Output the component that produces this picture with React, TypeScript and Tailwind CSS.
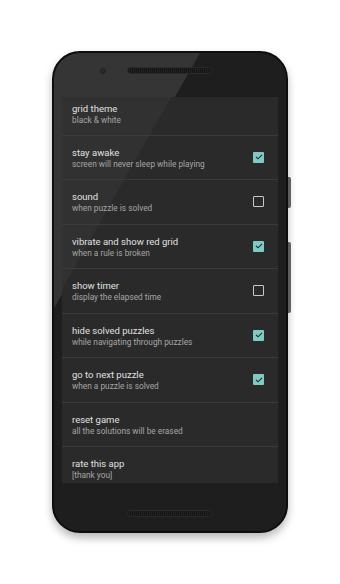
import React from "react";

type Pref = { title: string; summary: string; check?: boolean };

const prefs: Pref[] = [
  { title: "grid theme", summary: "black & white" },
  { title: "stay awake", summary: "screen will never sleep while playing", check: true },
  { title: "sound", summary: "when puzzle is solved", check: false },
  { title: "vibrate and show red grid", summary: "when a rule is broken", check: true },
  { title: "show timer", summary: "display the elapsed time", check: false },
  { title: "hide solved puzzles", summary: "while navigating through puzzles", check: true },
  { title: "go to next puzzle", summary: "when a puzzle is solved", check: true },
  { title: "reset game", summary: "all the solutions will be erased" },
  { title: "rate this app", summary: "[thank you]" },
];

function CheckBox({ on }: { on: boolean }) {
  if (!on) {
    return <div className="w-[11px] h-[11px] rounded-[1px] border-[1.5px] border-[#c9c9c9]" />;
  }
  return (
    <div className="w-[11px] h-[11px] rounded-[1px] bg-[#7fcbc3] flex items-center justify-center">
      <svg width="8" height="8" viewBox="0 0 24 24" fill="none">
        <path d="M4 12.5l5 5L20 6.5" stroke="#1f2a29" strokeWidth="3.2" strokeLinecap="square" />
      </svg>
    </div>
  );
}

function Row({ pref, index }: { pref: Pref; index: number }) {
  const first = index === 0;
  const last = index === prefs.length - 1;
  return (
    <div
      className={`flex items-center shrink-0 pl-[10px] pr-[14px] ${
        first ? "h-[38.5px]" : last ? "flex-1" : "h-[44.5px]"
      } ${last ? "" : "border-b border-[#3b3b3b]"}`}
    >
      <div className={`flex-1 min-w-0 ${first ? "mt-[-3px]" : last ? "self-start pt-[11px]" : "pt-[2px]"}`}>
        <div className="text-[9.5px] leading-[12px] text-[#e0e0e0]">{pref.title}</div>
        <div className="text-[8.3px] leading-[11px] text-[#a6a6a6]">{pref.summary}</div>
      </div>
      {pref.check !== undefined && <CheckBox on={pref.check} />}
    </div>
  );
}

export default function App() {
  return (
    <div
      className="w-[340px] h-[584px] bg-white pt-[51px] overflow-hidden"
      style={{ fontFamily: "Roboto, 'Noto Sans', sans-serif" }}
    >
      <div className="relative mx-auto w-[236px] h-[482px]">
        {/* side buttons */}
        <div className="absolute right-[-3px] top-[126px] w-[4px] h-[31px] rounded-r-[2px] bg-[#6a6a6a]" />
        <div className="absolute right-[-3px] top-[191px] w-[4px] h-[71px] rounded-r-[2px] bg-[#6a6a6a]" />

        {/* phone body */}
        <div className="relative w-full h-full rounded-[28px] bg-[#1e1e1e] border-[2px] border-[#0e0e0e] shadow-[0_5px_9px_rgba(0,0,0,0.28)] overflow-hidden flex flex-col px-[8px]">
          <div className="absolute inset-0 bg-white/[0.1] [clip-path:polygon(0_0,146px_0,0_255px)] pointer-events-none" />

          {/* top bezel */}
          <div className="relative h-[44px] shrink-0 flex justify-center">
            <div className="absolute left-[38px] top-[15px] w-[6px] h-[6px] rounded-full bg-[#2c2c2c] border border-[#202020]" />
            <div className="mt-[14px] w-[86px] h-[7px] rounded-full bg-[#141414] border border-[#2a2a2a] bg-[repeating-linear-gradient(90deg,#161616_0px,#161616_1px,#202020_1px,#202020_2px)]" />
          </div>

          {/* screen */}
          <div className="relative h-[386px] shrink-0 bg-[#2a2a2a] flex flex-col overflow-hidden">
            <div className="absolute inset-0 bg-white/[0.035] [clip-path:polygon(0_0,109px_0,0_192px)] pointer-events-none" />
            <div className="relative flex flex-col h-full">
              {prefs.map((p, i) => (
                <Row key={p.title} pref={p} index={i} />
              ))}
            </div>
          </div>

          {/* bottom bezel */}
          <div className="relative flex-1 flex justify-center">
            <div className="mt-[27px] w-[86px] h-[7px] rounded-full bg-[#141414] border border-[#2a2a2a] bg-[repeating-linear-gradient(90deg,#161616_0px,#161616_1px,#202020_1px,#202020_2px)]" />
          </div>
        </div>
      </div>
    </div>
  );
}
